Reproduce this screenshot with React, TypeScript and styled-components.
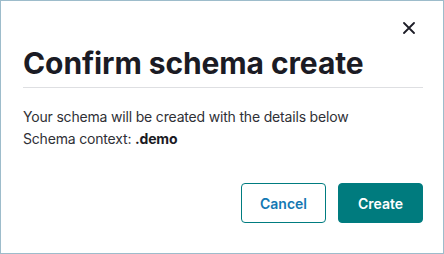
import React from "react";
import styled, { createGlobalStyle } from "styled-components";

const Global = createGlobalStyle`
  html, body { margin: 0; padding: 0; background: #ffffff; }
  body { font-family: Inter, "Noto Sans", sans-serif; -webkit-font-smoothing: antialiased; }
  * { box-sizing: border-box; }
`;

const Dialog = styled.div`
  width: 444px;
  height: 254px;
  border: 1px solid #9dbccb;
  background: #ffffff;
  padding: 0 20px 0 22px;
  display: flex;
  flex-direction: column;
`;

const TopBar = styled.div`
  display: flex;
  justify-content: flex-end;
  padding-top: 16px;
  height: 44px;
`;

const CloseButton = styled.button`
  width: 22px;
  height: 22px;
  margin-right: 3px;
  padding: 0;
  border: none;
  background: transparent;
  display: flex;
  align-items: center;
  justify-content: center;
  color: #1d1d27;
  cursor: pointer;
`;

const Title = styled.h1`
  margin: 0;
  font-family: Inter, sans-serif;
  font-size: 30px;
  line-height: 36px;
  font-weight: 700;
  color: #1b1b24;
  letter-spacing: -0.1px;
  padding-bottom: 6px;
  border-bottom: 1px solid #dedfe2;
`;

const Body = styled.div`
  padding-top: 18px;
  font-size: 14px;
  line-height: 22px;
  letter-spacing: -0.18px;
  color: #2f3036;
`;

const Line = styled.p`
  margin: 0;
`;

const Strong = styled.strong`
  font-weight: 700;
  color: #1b1b24;
`;

const Footer = styled.div`
  margin-top: 33px;
  display: flex;
  justify-content: flex-end;
  gap: 12px;
`;

const Button = styled.button<{ $primary?: boolean }>`
  width: 85px;
  height: 40px;
  border-radius: 4px;
  font-family: Inter, sans-serif;
  font-size: 14px;
  font-weight: 600;
  cursor: pointer;
  border: 1px solid #007c80;
  background: ${(p) => (p.$primary ? "#007b7e" : "#ffffff")};
  color: ${(p) => (p.$primary ? "#ffffff" : "#1378b3")};
`;

export default function App() {
  return (
    <>
      <Global />
      <Dialog>
        <TopBar>
          <CloseButton aria-label="Close">
            <svg width="12" height="12" viewBox="0 0 12 12" fill="none">
              <path d="M1 1L11 11M11 1L1 11" stroke="currentColor" strokeWidth="1.8" strokeLinecap="round" />
            </svg>
          </CloseButton>
        </TopBar>
        <Title>Confirm schema create</Title>
        <Body>
          <Line>Your schema will be created with the details below</Line>
          <Line>
            Schema context: <Strong>.demo</Strong>
          </Line>
        </Body>
        <Footer>
          <Button>Cancel</Button>
          <Button $primary>Create</Button>
        </Footer>
      </Dialog>
    </>
  );
}
